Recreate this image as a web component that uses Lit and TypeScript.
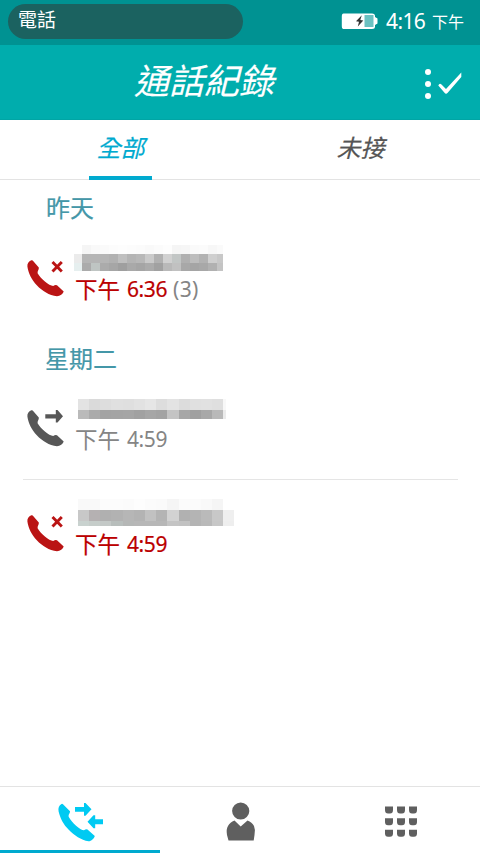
import { LitElement, html, svg, css } from "lit";
import { customElement, property } from "lit/decorators.js";

const HANDSET = "M4.300 .2 C1.700 1.300 0 3.500 .4 6.500 C1.300 13.500 4.800 19.700 9.800 25.300 C15.500 31.300 22 35.300 30 36.200 C33 36.200 36 33.800 36.700 31.600 L30 25.300 Q28.500 24.300 26.200 26 C22 26 13.500 18.500 10.600 13.300 C10.200 11 12.200 9.500 11.800 7.500 L5.700 .5 Q5 0 4.300 .2Z";

type Kind = "missed" | "outgoing";

@customElement("call-icon")
class CallIcon extends LitElement {
  @property() kind: Kind = "missed";
  static styles = css`
    :host { display: block; width: 38px; height: 38px; }
    svg { display: block; overflow: visible; }
    .missed { color: #ba1414; }
    .outgoing { color: #575757; }
  `;
  render() {
    return html`<svg class=${this.kind} width="38" height="38" viewBox="0 0 38 38" fill="currentColor">
      <path d=${HANDSET}></path>
      ${this.kind === "missed"
        ? svg`<path d="M25.500 2 L34.800 11.500 M34.800 2 L25.500 11.500" stroke="currentColor" stroke-width="2.900"></path>`
        : svg`<path d="M18.300 4.200 H28.800 V0 H30.500 L36 6.300 L30.500 12.600 H28.800 V8.400 H18.300 Z"></path>`}
    </svg>`;
  }
}

@customElement("pixel-block")
class PixelBlock extends LitElement {
  @property({ attribute: false }) cols: number[] = [];
  @property({ attribute: false }) rows: number[] = [];
  @property({ attribute: false }) shades: string[] = [];
  static styles = css`
    :host { display: block; }
    .grid { display: grid; width: max-content; }
  `;
  render() {
    const px = (a: number[]) => a.map((n) => n + "px").join(" ");
    return html`<div class="grid" style="grid-template-columns:${px(this.cols)};grid-template-rows:${px(this.rows)}">
      ${this.shades.map((row) => row.split(" ").map((c) => html`<span style="background:#${c}"></span>`))}
    </div>`;
  }
}

const WIDE = [11, 11, 11, 12, 11, 11, 11, 11, 12, 11, 11, 11, 11];
const BLOCKS = [
  {
    cols: [8, 9, 9, 9, 9, 9, 9, 9, 9, 9, 9, 9, 9, 9, 9, 9, 6],
    rows: [9, 9, 8],
    shades: [
      "fff f5f5f5 f9f9f9 fafafa fcfcfc fdfdfd fcfcfc fbfbfb f9f9f9 fbfbfb fdfdfd f5f5f5 f6f6f6 fafafa fbfbfb f7f7f7 fafafa",
      "ebebeb b5b5b5 b5b5b5 b5b5b5 b1b1b1 bfbfbf b4b4b4 b8b8b8 cacaca b1b1b1 d1d1d1 c2c6c5 b0b0b0 bdbdbd b2b2b2 cfcfcf c8c8c8",
      "e6efef ababab bfc5c3 ababab a6a6a6 9f9f9f a9a9a9 a5a5a5 ababab a1a1a1 b9b9b9 c1c1c1 a8a8a8 a5a5a5 a8a8a8 b1b1b1 c4c4c4",
    ],
  },
  {
    cols: [...WIDE, 3],
    rows: [11, 9],
    shades: [
      "e3e3e3 dadada dddddd e0e0e0 dfdfdf e2e2e2 e6e6e6 dddddd e3e3e3 dcdcdc e0e0e0 e1e1e1 dfdfdf f8f8f8",
      "bababa ababab a3a3a3 a4a4a4 a5a5a5 a1a1a1 a6a6a6 a3a3a3 c4c4c4 a7a7a7 a0a0a0 a8a8a8 b9b9b9 ebebeb",
    ],
  },
  {
    cols: [...WIDE, 11],
    rows: [11, 11, 5],
    shades: [
      "f9f9f9 f9f9f9 fcfcfc fcfcfc fbfbfb fdfdfd fbfbfb fafafa f5f5f5 fbfbfb fbfbfb f9f9f9 f5f5f5 fff",
      "c8c8c8 b5b1b2 b0b0b0 b2b2b2 b6b6b6 b3b3b3 c1c1c1 b4b4b4 d2d2d2 b1b1b1 b4b4b4 bababa c8c8c8 efefef",
      "c9d2cf c6cdca c4c9c7 b8bebc b5b7b6 b7b7b7 b7b7b7 b7b7b7 c4c4c4 c2c2c2 b4b4b4 b9b9b9 c7c7c7 eeeeee",
    ],
  },
];

@customElement("call-row")
class CallRow extends LitElement {
  @property() kind: Kind = "missed";
  @property() hour = "";
  @property() count = "";
  @property({ type: Number }) block = 0;
  static styles = css`
    :host { display: flex; height: 60px; }
    call-icon { margin: 14px 0 0 27px; flex: none; }
    .body { display: flex; flex-direction: column; justify-content: flex-end; }
    .name { margin-left: 13px; }
    .name.first { margin-left: 9px; }
    .name.high { margin-bottom: 2px; }
    .time { display: flex; margin: 2px 0 0 10px; height: 33px; line-height: 33px; white-space: nowrap;
      font-size: 21px; letter-spacing: -.4px; }
    .day { font-size: 22.500px; letter-spacing: 0; width: 52px; }
    .missed { color: #bb0000; }
    .outgoing { color: #858585; }
    .missed .day, .missed .hour { -webkit-text-stroke: .2px currentColor; }
    .count { color: #858585; margin-left: 6px; letter-spacing: .3px; }
  `;
  render() {
    const b = BLOCKS[this.block];
    const variant = ["first", "high", ""][this.block];
    return html`<call-icon .kind=${this.kind}></call-icon>
      <div class="body">
        <pixel-block class="name ${variant}" .cols=${b.cols} .rows=${b.rows} .shades=${b.shades}></pixel-block>
        <div class="time ${this.kind}"><span class="day">下午</span><span class="hour">${this.hour}</span>
          ${this.count ? html`<span class="count">${this.count}</span>` : ""}</div>
      </div>`;
  }
}

@customElement("app-root")
class AppRoot extends LitElement {
  static styles = css`
    :host { display: flex; flex-direction: column; width: 480px; height: 853px; overflow: hidden; background: #fff;
      font-family: "Noto Sans", "Noto Sans CJK TC", sans-serif; }
    .status { height: 45px; flex: none; display: flex; background: #009292; color: #fff; box-sizing: border-box; padding: 4px 15px 0 8px; }
    .pill { width: 235px; height: 35px; border-radius: 18px; background: #1b6260; box-sizing: border-box; padding-left: 10px;
      font-size: 19px; line-height: 33px; }
    .battery { margin: 8px 0 0 98px; }
    .clock { margin-left: 8px; font-size: 21px; line-height: 34px; letter-spacing: -.6px; width: 46px; white-space: nowrap; }
    .ampm { font-size: 16px; line-height: 36px; white-space: nowrap; }
    .header { height: 75px; flex: none; display: flex; background: #00adad; color: #fff; box-sizing: border-box; border-bottom: 1px solid #00a5a5; }
    .title { margin-left: 134px; width: 287px; font-size: 35px; line-height: 71px; font-style: italic; white-space: nowrap; -webkit-text-stroke: .15px currentColor; }
    .edit { margin-top: 21px; }
    .tabs { height: 60px; flex: none; box-sizing: border-box; border-bottom: 1px solid #e3e3e3; display: grid; grid-template-columns: 1fr 1fr; }
    .tab { display: flex; justify-content: center; font-size: 24px; line-height: 56px; font-style: italic; color: #555; -webkit-text-stroke: .2px currentColor; }
    .label { width: 63px; text-align: center; text-indent: 1px; height: 56px; border-bottom: 4px solid transparent; }
    .on { color: #00aacf; }
    .on .label { border-color: #00aacf; }
    .list { flex: 1; min-height: 0; }
    .day { height: 66px; line-height: 55px; padding-left: 46px; font-size: 24px; color: #4497a8; -webkit-text-stroke: .2px currentColor; }
    .day.second { height: 65px; padding-left: 45px; margin-top: 25px; }
    .rule { height: 1px; margin: 23px 22px 21px 23px; background: #e5e5e5; }
    .bottom { height: 67px; flex: none; box-sizing: border-box; border-top: 1px solid #e3e3e3; display: grid; grid-template-columns: repeat(3, 1fr); }
    .nav { box-sizing: border-box; border-bottom: 3px solid transparent; display: block; color: #5f5f5f; }
    .nav.current { border-color: #00aacf; color: #00caf2; }
    svg { display: block; flex: none; overflow: visible; }
  `;
  render() {
    return html`
      <div class="status">
        <div class="pill">電話</div>
        <svg class="battery" width="37" height="18" viewBox="0 0 37 18">
          <path d="M2.500 1.500 H31 Q34 1.500 34 4 V5 L36.500 6.500 V11.500 L34 13 V14.500 Q34 17 31 17 H2.500 Q.8 17 .8 14 V4.500 Q.8 1.500 2.500 1.500Z" fill="#fff"></path>
          <path d="M23.500 3 H32.500 V15 H23.500Z" fill="#6bc1c1"></path>
          <path d="M20.800 3.300 L15 9.300 L18 9.800 L16.800 14.500 L22.300 8.500 L19.300 8Z" fill="#333"></path>
        </svg>
        <div class="clock">4:16</div><div class="ampm">下午</div>
      </div>
      <div class="header">
        <div class="title">通話紀錄</div>
        <svg class="edit" width="42" height="36" viewBox="0 0 42 36">
          <g fill="#fff"><circle cx="7" cy="6" r="3"></circle><circle cx="7" cy="18" r="3"></circle><circle cx="7" cy="30" r="3"></circle></g>
          <path d="M17.300 19.500 Q18.500 16.500 20.500 18.500 L25 23 L40.300 6.500 V11 L26.700 26.800 Q25 28.500 23.500 26.800Z" fill="#fff"></path>
        </svg>
      </div>
      <div class="tabs">
        <div class="tab on"><span class="label">全部</span></div>
        <div class="tab"><span class="label">未接</span></div>
      </div>
      <div class="list">
        <div class="day">昨天</div>
        <call-row kind="missed" hour="6:36" count="(3)" .block=${0}></call-row>
        <div class="day second">星期二</div>
        <call-row kind="outgoing" hour="4:59" .block=${1}></call-row>
        <div class="rule"></div>
        <call-row kind="missed" hour="4:59" .block=${2}></call-row>
      </div>
      <div class="bottom">
        <div class="nav current"><svg width="160" height="62" viewBox="0 787 160 62" fill="currentColor">
          <path d="M61.500 804 C59 805.500 57.900 808 58.600 811.500 C60.500 819 63.500 824.500 68.500 829.500 C74.500 835.500 81 840 88.500 841.300 C91.500 841.300 94 838.500 94.800 836 L87.500 829.500 Q86 828.800 84 830.300 C80 830 72 823 68.800 817 C68 814.500 70.300 813 70 811.200 L63 804.200 Q62.300 803.600 61.500 804Z"></path>
          <path d="M75 807 H84 V803 H85.500 L91.500 809.300 L85.500 815.800 H84 V811.800 H75Z M103 819.300 H95.200 V815.200 H93.500 L87.500 821.700 L93.500 828.200 H95.200 V824.200 H103Z"></path>
        </svg></div>
        <div class="nav"><svg width="160" height="62" viewBox="160 787 160 62" fill="currentColor">
          <circle cx="240.700" cy="811" r="8.600"></circle>
          <path d="M234.500 820.500 L240.700 826.500 L247.500 820.500 Q252 822 254 826 Q255.700 830 254.500 835 L253.700 840.500 H228.500 L227 835 Q226 829 228 826 Q230 822 234.500 820.500Z"></path>
        </svg></div>
        <div class="nav"><svg width="160" height="62" viewBox="320 787 160 62" fill="currentColor">
          ${[806.5, 818.2, 829.7].map((y) => [385, 397, 409].map((x) =>
            svg`<path d="M0 0 H8 V3.500 Q8 7 5 7 H3 Q0 7 0 3.500Z" transform="translate(${x} ${y})"></path>`))}
        </svg></div>
      </div>`;
  }
}
